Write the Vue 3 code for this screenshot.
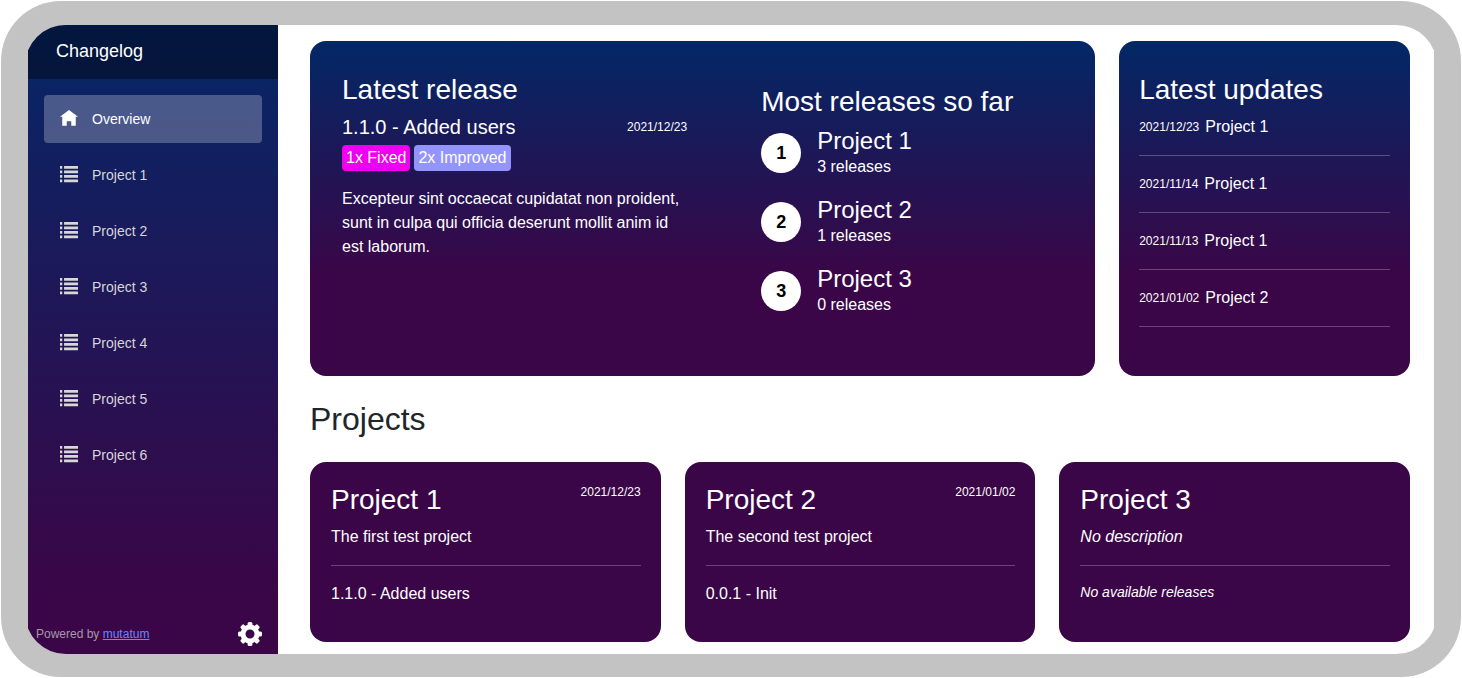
<script setup>
const navItems = ['Project 1', 'Project 2', 'Project 3', 'Project 4', 'Project 5', 'Project 6']

const gearTeeth = [0, 45, 90, 135, 180, 225, 270, 315]

const ranking = [
  { name: 'Project 1', releases: 3 },
  { name: 'Project 2', releases: 1 },
  { name: 'Project 3', releases: 0 },
]

const updates = [
  { date: '2021/12/23', name: 'Project 1' },
  { date: '2021/11/14', name: 'Project 1' },
  { date: '2021/11/13', name: 'Project 1' },
  { date: '2021/01/02', name: 'Project 2' },
]

const projects = [
  { name: 'Project 1', date: '2021/12/23', description: 'The first test project', release: '1.1.0 - Added users' },
  { name: 'Project 2', date: '2021/01/02', description: 'The second test project', release: '0.0.1 - Init' },
  { name: 'Project 3', date: '', description: '', release: '' },
]
</script>

<template>
  <div class="frame">
    <div class="screen">
      <aside class="sidebar">
        <header class="brand"><a href="#">Changelog</a></header>
        <nav class="nav">
          <a href="#" class="nav-link active">
            <svg class="nav-icon" viewBox="0 0 8 8" aria-hidden="true">
              <path d="M4 0l-4 3h1v4h2v-2h2v2h2v-4.03l1 .03-4-3z" />
            </svg>
            Overview
          </a>
          <a v-for="item in navItems" :key="item" href="#" class="nav-link">
            <svg class="nav-icon" viewBox="0 0 8 8" aria-hidden="true">
              <path d="M0 0h1v1.2h-1zM1.8 0h6.2v1.2h-6.2zM0 2h1v1.2h-1zM1.8 2h6.2v1.2h-6.2zM0 4h1v1.2h-1zM1.8 4h6.2v1.2h-6.2zM0 6h1v1.2h-1zM1.8 6h6.2v1.2h-6.2z" />
            </svg>
            {{ item }}
          </a>
        </nav>
        <footer class="sidebar-footer">
          <span>Powered by <a href="#">mutatum</a></span>
          <button type="button" class="settings" aria-label="Settings">
            <svg viewBox="0 0 24 24" aria-hidden="true">
              <circle cx="12" cy="12" r="7" fill="none" stroke="#fff" stroke-width="5" />
              <rect
                v-for="angle in gearTeeth"
                :key="angle"
                x="9.6"
                y="0"
                width="4.8"
                height="5"
                rx="1.5"
                :transform="`rotate(${angle} 12 12)`"
              />
            </svg>
          </button>
        </footer>
      </aside>

      <main class="content">
        <div class="top">
          <section class="card hero">
            <article class="latest">
              <h2>Latest release</h2>
              <div class="latest-row">
                <h3>1.1.0 - Added users</h3>
                <time>2021/12/23</time>
              </div>
              <div class="badges">
                <span class="badge fixed">1x Fixed</span>
                <span class="badge improved">2x Improved</span>
              </div>
              <p>Excepteur sint occaecat cupidatat non proident, sunt in culpa qui officia deserunt mollit anim id est laborum.</p>
            </article>
            <div class="most">
              <h2>Most releases so far</h2>
              <ol class="ranking">
                <li v-for="(entry, i) in ranking" :key="entry.name">
                  <span class="rank">{{ i + 1 }}</span>
                  <div>
                    <h4>{{ entry.name }}</h4>
                    <p>{{ entry.releases }} releases</p>
                  </div>
                </li>
              </ol>
            </div>
          </section>

          <section class="card updates">
            <h2>Latest updates</h2>
            <ul>
              <li v-for="update in updates" :key="update.date">
                <time>{{ update.date }}</time>
                <span>{{ update.name }}</span>
              </li>
            </ul>
          </section>
        </div>

        <h1>Projects</h1>

        <div class="projects">
          <article v-for="project in projects" :key="project.name" class="card project">
            <div class="project-head">
              <h2>{{ project.name }}</h2>
              <time v-if="project.date">{{ project.date }}</time>
            </div>
            <p v-if="project.description" class="description">{{ project.description }}</p>
            <p v-else class="description"><em>No description</em></p>
            <p v-if="project.release" class="release">{{ project.release }}</p>
            <p v-else class="release none"><em>No available releases</em></p>
          </article>
        </div>
      </main>
    </div>
  </div>
</template>

<style>
body {
  background: #fff;
}
</style>

<style scoped>
.frame,
.frame * {
  box-sizing: border-box;
}

.frame {
  display: flex;
  min-height: calc(100vh - 2px);
  margin: 1px;
  padding: 24px 24px 23px;
  border-radius: 60px;
  background: #c3c3c3;
  font-family: "Liberation Sans", Arial, sans-serif;
  font-size: 16px;
  line-height: 24px;
  color: #212529;
}

.screen {
  display: flex;
  flex: 1;
  min-width: 0;
  padding: 0 3px;
  border-radius: 41px;
  overflow: hidden;
}

h1,
h2,
h3,
h4,
p,
ul,
ol {
  margin: 0;
  padding: 0;
  font-weight: 400;
}

ul,
ol {
  list-style: none;
}

time {
  font-size: 12px;
  line-height: 18px;
  white-space: nowrap;
}

h1 {
  margin: 24px 0;
  font-size: 32px;
  line-height: 38px;
}

h2 {
  margin-bottom: 8px;
  font-size: 28px;
  line-height: 34px;
}

/* Sidebar */
.sidebar {
  display: flex;
  flex-direction: column;
  flex: 0 0 250px;
  background: linear-gradient(180deg, #052767 0%, #3a0647 90%);
}

.brand {
  display: flex;
  align-items: center;
  height: 54px;
  padding: 0 28px 2px;
  background: rgba(0, 0, 0, 0.4);
  font-size: 18px;
}

.brand a {
  color: #fff;
  text-decoration: none;
}

.nav {
  display: flex;
  flex-direction: column;
  gap: 8px;
  padding: 16px;
}

.nav-link {
  display: flex;
  align-items: center;
  gap: 14px;
  height: 48px;
  padding: 0 16px;
  border-radius: 4px;
  color: #d7d7d7;
  font-size: 14px;
  text-decoration: none;
}

.nav-link.active {
  background: rgba(255, 255, 255, 0.25);
  color: #fff;
}

.nav-icon {
  width: 18px;
  height: 18px;
  fill: currentColor;
}

.sidebar-footer {
  display: flex;
  align-items: center;
  justify-content: space-between;
  margin-top: auto;
  padding: 8px 16px 8px 8px;
  color: #a69aaa;
  font-size: 12px;
}

.sidebar-footer a {
  color: #6a86ff;
}

.settings {
  width: 24px;
  height: 24px;
  padding: 0;
  border: 0;
  background: none;
}

.settings svg {
  display: block;
  width: 24px;
  height: 24px;
  fill: #fff;
}

/* Content */
.content {
  flex: 1;
  min-width: 0;
  padding: 16px 24px 12px 32px;
  background: #fff;
}

.card {
  border-radius: 16px;
  background: #3a0647;
  color: #fff;
}

.top {
  display: grid;
  grid-template-columns: 27fr 10fr;
  gap: 24px;
}

.hero,
.updates {
  background: linear-gradient(180deg, #022866 0%, #3a0647 70%);
}

.hero {
  display: grid;
  grid-template-columns: 8fr 7fr;
  gap: 74px;
  padding: 32px;
}

.latest-row {
  display: flex;
  align-items: center;
  justify-content: space-between;
}

h3 {
  font-size: 20px;
}

.badges {
  display: flex;
  gap: 4px;
  margin: 6px 0 16px;
}

.badge {
  padding: 4px;
  border-radius: 4px;
  line-height: 18px;
}

.fixed {
  background: #f000f0;
}

.improved {
  background: #9494ff;
}

.most {
  padding: 12px 0;
}

.most h2 {
  margin-bottom: 7px;
}

.ranking {
  display: flex;
  flex-direction: column;
  gap: 16px;
  padding-bottom: 15px;
}

.ranking li {
  display: flex;
  align-items: center;
  gap: 16px;
}

.rank {
  display: flex;
  align-items: center;
  justify-content: center;
  width: 40px;
  height: 40px;
  border-radius: 50%;
  background: #fff;
  color: #000;
  font-size: 18px;
  font-weight: 700;
}

h4 {
  font-size: 24px;
  line-height: 29px;
}

.updates {
  padding: 32px 20px;
}

.updates li {
  display: flex;
  align-items: center;
  gap: 6px;
  margin-bottom: 16px;
  padding-bottom: 16px;
  border-bottom: 1px solid rgba(255, 255, 255, 0.25);
}

.projects {
  display: grid;
  grid-template-columns: repeat(3, 1fr);
  gap: 24px;
}

.project {
  padding: 21px 20px 36px 21px;
}

.project-head {
  display: flex;
  align-items: flex-start;
  justify-content: space-between;
}

.description {
  padding-bottom: 16px;
  border-bottom: 1px solid rgba(255, 255, 255, 0.25);
}

.release {
  padding-top: 16px;
}

.none {
  font-size: 14px;
  line-height: 21px;
}
</style>
